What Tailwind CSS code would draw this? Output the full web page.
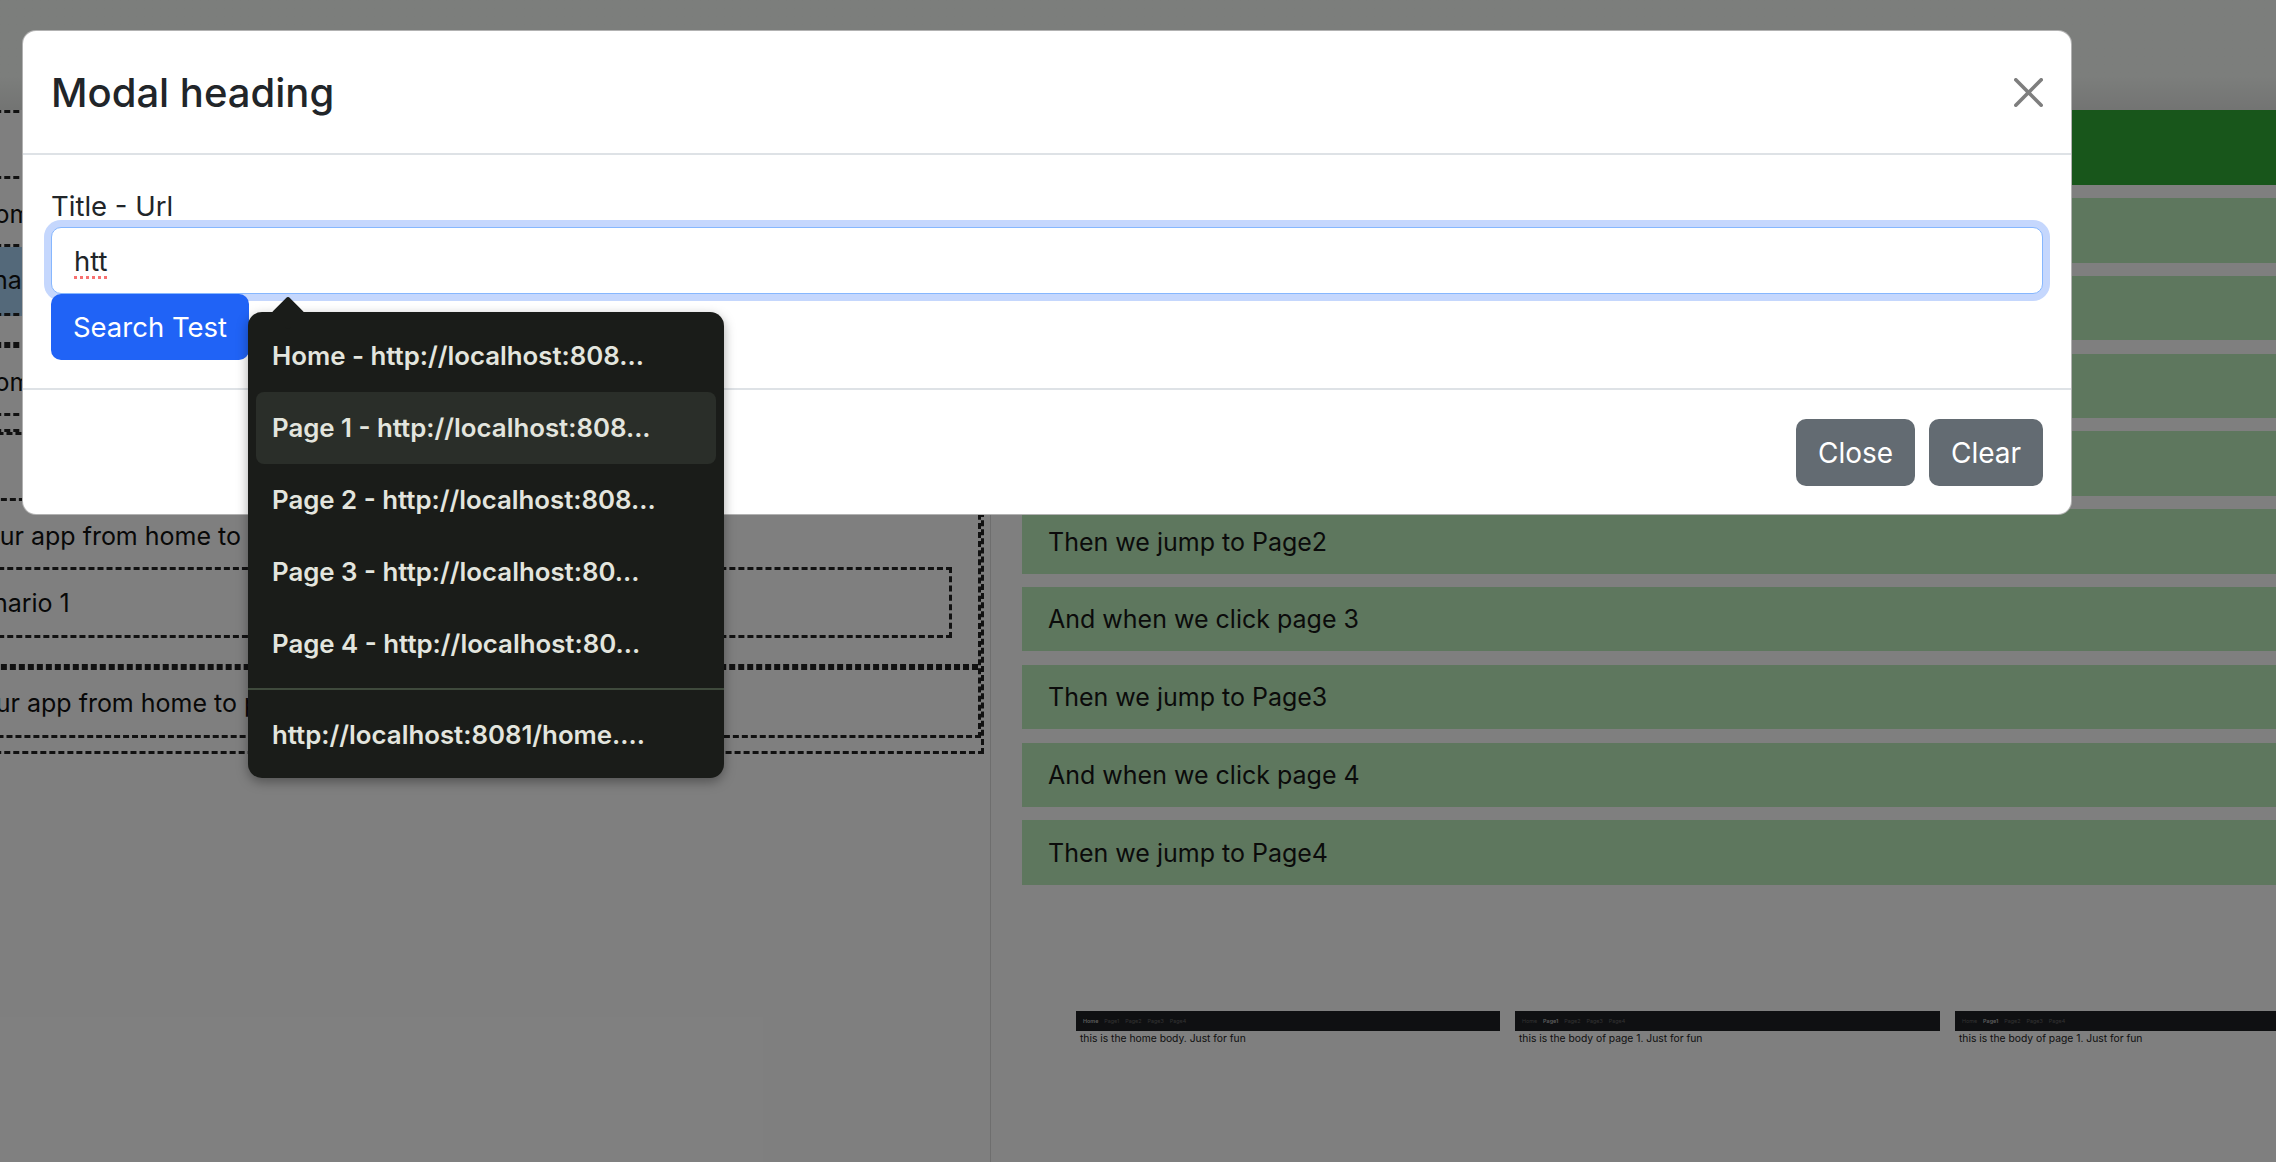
<!DOCTYPE html>
<html lang="en">
<head>
    <meta charset="UTF-8">
    <meta name="viewport" content="width=device-width, initial-scale=1.0">
    <title>Modal heading</title>
    <script src="https://cdn.jsdelivr.net/npm/@tailwindcss/browser@4"></script>
</head>
<body class="relative h-[1162px] overflow-hidden bg-white font-['Inter',sans-serif] text-[#1c1c1c]">
    <!-- Page behind the modal -->
    <div class="h-[110px] bg-linear-to-b from-[#f8fcf8] via-[#f8fcf8] via-70% to-[#e6e8e6]"></div>

    <div class="flex h-[1052px]">
        <!-- Left panel, scrolled sideways -->
        <div class="w-[991px] shrink-0 overflow-hidden border-r border-[#dcdcdc]">
            <div class="ml-[-140px] w-[1124px] text-[25px] leading-[38px] text-[#111]">
                <div class="h-[69px] border-[3px] border-dashed border-[#222]"></div>
                <div class="flex h-[68px] items-center border-[3px] border-t-0 border-dashed border-[#222] pl-[56px] pt-[4px]">Test from</div>
                <div class="flex h-[69px] items-center border-[3px] border-t-0 border-dashed border-[#222] bg-[#a8d2f4] pl-[85px]">Scenario</div>

                <div class="mt-[26px] h-[74px] border-t-[3px] border-dashed border-[#222]">
                    <div class="flex h-[71px] items-center border-[3px] border-dashed border-[#222] pl-[56px] pt-[2px]">Test from</div>
                </div>

                <div class="mt-[13px] h-[325px] border-[3px] border-dashed border-[#222]">
                    <div class="h-[306px] border-[3px] border-dashed border-[#222]">
                        <div class="h-[66px] border-b-[3px] border-dashed border-[#222]"></div>
                        <div class="flex h-[66px] items-center pl-[48px] pt-[3px]">Test your app from home to page1</div>
                        <div class="ml-[60px] mr-[26px] flex h-[71px] items-center border-[3px] border-dashed border-[#222] pl-[19px] pt-[1px]">Scenario 1</div>
                        <div class="mt-[26px] h-[71px] border-t-[3px] border-dashed border-[#222]">
                            <div class="flex h-[68px] items-center border-t-[3px] border-dashed border-[#222] pl-[44px]">Test your app from home to page2</div>
                        </div>
                    </div>
                </div>
            </div>
        </div>

        <!-- Right panel -->
        <div class="min-w-0 flex-1 overflow-hidden pl-[31px] text-[25px] text-[#161616]">
            <div class="h-[75px] bg-[#30ac36]"></div>
            <div class="mt-[13px] flex flex-col gap-[13.3px]">
                <div class="flex h-[64.5px] items-center bg-[#bceebc] pl-[26px] pt-[2px]">When we load home</div>
                <div class="flex h-[64.5px] items-center bg-[#bceebc] pl-[26px] pt-[2px]">And when we click page 1</div>
                <div class="flex h-[64.5px] items-center bg-[#bceebc] pl-[26px] pt-[2px]">Then we jump to Page1</div>
                <div class="flex h-[64.5px] items-center bg-[#bceebc] pl-[26px] pt-[2px]">And when we click page 2</div>
                <div class="flex h-[64.5px] items-center bg-[#bceebc] pl-[26px] pt-[2px]">Then we jump to Page2</div>
                <div class="flex h-[64.5px] items-center bg-[#bceebc] pl-[26px] pt-[2px]">And when we click page 3</div>
                <div class="flex h-[64.5px] items-center bg-[#bceebc] pl-[26px] pt-[2px]">Then we jump to Page3</div>
                <div class="flex h-[64.5px] items-center bg-[#bceebc] pl-[26px] pt-[2px]">And when we click page 4</div>
                <div class="flex h-[64.5px] items-center bg-[#bceebc] pl-[26px] pt-[2px]">Then we jump to Page4</div>
            </div>

            <!-- Screenshot thumbnails -->
            <div class="ml-[54px] mt-[126px] flex w-[1300px] gap-[15px] text-[10.3px] leading-[14px] text-[#222]">
                <div class="w-[424px] shrink-0">
                    <div class="flex h-5 items-center gap-[6px] bg-[#1e2024] pl-[7px] text-[5.4px] text-[#666]">
                        <span class="font-semibold text-[#bbb]">Home</span><span>Page1</span><span>Page2</span><span>Page3</span><span>Page4</span>
                    </div>
                    <p class="pl-1">this is the home body. Just for fun</p>
                </div>
                <div class="w-[425px] shrink-0">
                    <div class="flex h-5 items-center gap-[6px] bg-[#1e2024] pl-[7px] text-[5.4px] text-[#666]">
                        <span>Home</span><span class="font-semibold text-[#bbb]">Page1</span><span>Page2</span><span>Page3</span><span>Page4</span>
                    </div>
                    <p class="pl-1">this is the body of page 1. Just for fun</p>
                </div>
                <div class="w-[424px] shrink-0">
                    <div class="flex h-5 items-center gap-[6px] bg-[#1e2024] pl-[7px] text-[5.4px] text-[#666]">
                        <span>Home</span><span class="font-semibold text-[#bbb]">Page1</span><span>Page2</span><span>Page3</span><span>Page4</span>
                    </div>
                    <p class="pl-1">this is the body of page 1. Just for fun</p>
                </div>
            </div>
        </div>
    </div>

    <!-- Backdrop -->
    <div class="absolute inset-0 bg-black/50"></div>

    <!-- Modal -->
    <div class="absolute left-[22px] top-[30px] w-[2050px] rounded-[14px] border border-black/30 bg-white text-[#212529]">
        <div class="flex h-[124px] items-center justify-between border-b-2 border-[#dee2e6] pl-[28px] pr-[28px]">
            <h5 class="pt-[2px] text-[40px] font-medium leading-[48px]">Modal heading</h5>
            <svg class="size-[29px] opacity-50" viewBox="0 0 16 16" fill="#000">
                <path d="M.293.293a1 1 0 011.414 0L8 6.586 14.293.293a1 1 0 111.414 1.414L9.414 8l6.293 6.293a1 1 0 01-1.414 1.414L8 9.414l-6.293 6.293a1 1 0 01-1.414-1.414L6.586 8 .293 1.707a1 1 0 010-1.414z"/>
            </svg>
        </div>
        <div class="px-[28px] pb-[28px] pt-[30px] text-[27.5px] leading-[42px]">
            <label class="block">Title - Url</label>
            <div class="flex h-[67px] items-center rounded-[10px] border border-[#86b7fe] bg-white px-[22px] shadow-[0_0_0_7px_#c5d7fd]">
                <span class="underline decoration-[#f87171] decoration-dotted decoration-[3px] underline-offset-[5px]">htt</span>
            </div>
            <button class="relative block h-[66px] w-[198px] rounded-[10px] bg-[#2063f6] text-white">Search Test</button>
        </div>
        <div class="flex justify-end gap-[14px] border-t-2 border-[#dee2e6] px-[28px] pb-[28px] pt-[29px] text-[28px]">
            <button class="h-[67px] w-[119px] rounded-[10px] bg-[#636b72] text-white">Close</button>
            <button class="h-[67px] w-[114px] rounded-[10px] bg-[#636b72] text-white">Clear</button>
        </div>
    </div>

    <!-- Autocomplete popover -->
    <div class="absolute left-[248px] top-[312px] w-[476px] rounded-[14px] bg-[#1a1c19] pb-[7px] pt-2 text-[25.8px] font-semibold text-[#e3e5de] shadow-[0_4px_12px_rgba(0,0,0,0.35)]">
        <div class="absolute left-[28px] top-[-11px] size-6 rotate-45 rounded-[3px] bg-[#1a1c19]"></div>
        <div class="relative mx-2 flex h-[72px] items-center rounded-lg pl-[16px] pt-[1px]">Home - http://localhost:808...</div>
        <div class="mx-2 flex h-[72px] items-center rounded-lg bg-[#2a2e29] pl-[16px] pt-[1px]">Page 1 - http://localhost:808...</div>
        <div class="mx-2 flex h-[72px] items-center rounded-lg pl-[16px] pt-[1px]">Page 2 - http://localhost:808...</div>
        <div class="mx-2 flex h-[72px] items-center rounded-lg pl-[16px] pt-[1px]">Page 3 - http://localhost:80...</div>
        <div class="mx-2 flex h-[72px] items-center rounded-lg pl-[16px] pt-[1px]">Page 4 - http://localhost:80...</div>
        <div class="mb-[9px] mt-2 h-[2px] bg-[#3f4a3c]"></div>
        <div class="mx-2 flex h-[72px] items-center rounded-lg pl-[16px] pt-[1px]">http://localhost:8081/home....</div>
    </div>
</body>
</html>
